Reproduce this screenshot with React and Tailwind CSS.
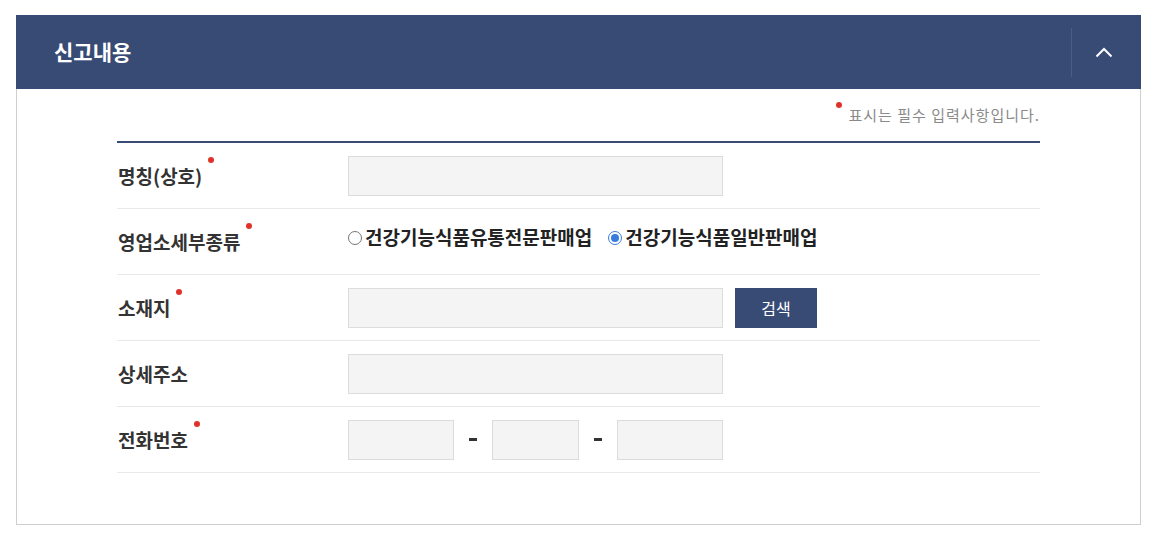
import React from "react";

const font = { fontFamily: '"Noto Sans CJK KR", "Noto Sans", sans-serif' };

function Dot() {
  return <span className="absolute -top-[5px] -right-[12px] w-[6px] h-[6px] rounded-full bg-[#e0322b]" />;
}

function Label({ children, req }) {
  return (
    <div className="w-[231px] pl-[1px] shrink-0">
      <span className="relative inline-block text-[19px] font-semibold text-[#333] leading-[24px] pt-[2px]">
        {children}
        {req && <Dot />}
      </span>
    </div>
  );
}

function Input({ w }) {
  return <div className={`${w} h-[40px] bg-[#f4f4f4] border border-[#dcdcdc]`} />;
}

function Row({ children }) {
  return <div className="h-[66px] border-b border-[#e8e8e8] flex items-center">{children}</div>;
}

function Radio({ checked, children }) {
  return (
    <label className="flex items-center text-[19px] font-semibold text-[#222]">
      {checked ? (
        <span className="w-[14px] h-[14px] rounded-full border border-[#3a7be0] flex items-center justify-center mr-[3px]">
          <span className="w-[8px] h-[8px] rounded-full bg-[#3a7be0]" />
        </span>
      ) : (
        <span className="w-[14px] h-[14px] rounded-full border border-[#767676] mr-[3px]" />
      )}
      {children}
    </label>
  );
}

function Dash() {
  return (
    <div className="w-[38px] flex justify-center">
      <div className="w-[8px] h-[3px] bg-[#333]" />
    </div>
  );
}

export default function App() {
  return (
    <div className="bg-white w-[1157px] h-[542px] pt-[15px] pl-[16px]" style={font}>
      <div className="w-[1125px]">
        <div className="h-[74px] bg-[#384b75] flex items-center pl-[38px] pr-0">
          <div className="text-white text-[21px] font-bold flex-1 pb-[1px]">신고내용</div>
          <div className="w-px h-[49px] bg-[#4c5e86]" />
          <div className="w-[69px] flex items-center justify-center pr-[5px]">
            <svg width="18" height="11" viewBox="0 0 18 11" fill="none">
              <path d="M1.5 9.5L9 2L16.5 9.5" stroke="white" strokeWidth="2" />
            </svg>
          </div>
        </div>
        <div className="border border-t-0 border-[#cfcfcf] px-[100px] pb-[51px]">
          <div className="h-[52px] flex items-end justify-end pb-[16px]">
            <span className="relative text-[15px] text-[#8a8a8a] leading-[20px] tracking-[1px]">
              <span className="absolute -left-[13px] -top-[3px] w-[6px] h-[6px] rounded-full bg-[#e0322b]" />
              표시는 필수 입력사항입니다.
            </span>
          </div>
          <div className="border-t-2 border-[#384b75]">
            <Row>
              <Label req>명칭(상호)</Label>
              <Input w="w-[375px]" />
            </Row>
            <Row>
              <Label req>영업소세부종류</Label>
              <div className="flex items-center gap-[16px] -mt-[8px]">
                <Radio>건강기능식품유통전문판매업</Radio>
                <Radio checked>건강기능식품일반판매업</Radio>
              </div>
            </Row>
            <Row>
              <Label req>소재지</Label>
              <Input w="w-[375px]" />
              <button className="ml-[12px] w-[82px] h-[40px] bg-[#384b75] text-white text-[16px]">검색</button>
            </Row>
            <Row>
              <Label>상세주소</Label>
              <Input w="w-[375px]" />
            </Row>
            <Row>
              <Label req>전화번호</Label>
              <Input w="w-[106px]" />
              <Dash />
              <Input w="w-[87px]" />
              <Dash />
              <Input w="w-[106px]" />
            </Row>
          </div>
        </div>
      </div>
    </div>
  );
}
